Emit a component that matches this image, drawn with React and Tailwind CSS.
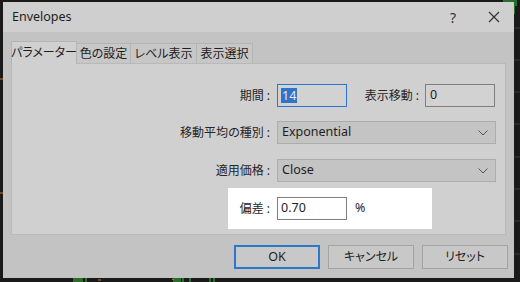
import React from 'react';

const jp = { fontFamily: '"Noto Sans", "Noto Sans CJK JP", sans-serif' };

// Chart behind the dialog (only the edges are visible)
const ChartBackdrop = () => (
  <svg className="absolute inset-0" width="520" height="282" viewBox="0 0 520 282">
    <rect width="520" height="282" fill="#1a1a1a" />
    {[28, 60, 92, 124, 157, 189, 221, 254].map((y) => (
      <line key={y} x1="514" x2="520" y1={y} y2={y} stroke="#3a3a3a" />
    ))}
    <line x1="0" x2="3" y1="79" y2="79" stroke="#c27a2a" />
    <line x1="0" x2="3" y1="193" y2="193" stroke="#c27a2a" />
    {[504, 506, 508, 510, 512, 514, 516].map((x, i) => (
      <line key={x} x1={x} x2={x} y1="0" y2={6 + (i % 3) * 4} stroke="#38c23a" />
    ))}
    {[74, 76, 78, 80, 82, 86, 174, 176, 178, 180, 183, 190, 210, 214].map((x) => (
      <line key={x} x1={x} x2={x} y1="278" y2="282" stroke="#38c23a" />
    ))}
    <line x1="98" x2="101" y1="280" y2="280" stroke="#c27a2a" />
    <line x1="172" x2="174" y1="279" y2="280" stroke="#c27a2a" />
  </svg>
);

const Chevron = () => (
  <svg width="10" height="6" viewBox="0 0 10 6" className="text-[#555]">
    <path d="M0.5 0.5 L5 5 L9.5 0.5" fill="none" stroke="currentColor" strokeWidth="1" />
  </svg>
);

const Select = ({ value }) => (
  <div className="flex items-center justify-between w-[219px] h-[23px] bg-[#c4c4c4] border border-[#adadad] pl-[4px] pr-[7px] text-[12.5px] text-[#1e1e1e]">
    <span>{value}</span>
    <Chevron />
  </div>
);

const Label = ({ children, className = '' }) => (
  <div className={`text-right whitespace-nowrap text-[12px] text-[#262626] pr-[1px] ${className}`}>{children}</div>
);

export default function App() {
  const tabs = [
    { label: '色の設定', w: 'w-[54px]' },
    { label: 'レベル表示', w: 'w-[66px]' },
    { label: '表示選択', w: 'w-[56px]' },
  ];

  return (
    <div className="relative w-[520px] h-[282px] overflow-hidden [font-feature-settings:'palt']" style={jp}>
      <ChartBackdrop />

      <div className="relative pl-[3px] pt-[2px]">
        <div className="w-[511px] h-[276px] bg-[#c3c3c3] flex flex-col">
          {/* Title bar */}
          <div className="h-[30px] bg-[#cfcfcf] flex items-center pl-[9px] text-[12.5px] text-[#1e1e1e]">
            <span className="flex-1">Envelopes</span>
            <span className="w-[20px] text-center text-[14px] text-[#333] mr-[25px]">?</span>
            <svg width="12" height="12" viewBox="0 0 12 12" className="mr-[14px]">
              <path d="M1 1 L11 11 M11 1 L1 11" stroke="#333" strokeWidth="1.2" />
            </svg>
          </div>

          <div className="px-[8px] pt-[8px]">
            {/* Tabs */}
            <div className="flex items-end h-[23px]">
              <div className="w-[66px] h-[23px] bg-[#d0d0d0] border border-b-0 border-[#b4b4b4] flex items-center justify-center whitespace-nowrap text-[12px] text-[#1e1e1e] relative z-10 translate-y-[1px]">
                パラメーター
              </div>
              {tabs.map((t) => (
                <div
                  key={t.label}
                  className={`${t.w} h-[20px] bg-[#c7c7c7] border border-l-0 border-b-0 border-[#b4b4b4] flex items-center justify-center whitespace-nowrap text-[12px] text-[#1e1e1e]`}
                >
                  {t.label}
                </div>
              ))}
            </div>

            {/* Panel */}
            <div className="h-[172px] bg-[#d0d0d0] border border-[#b9b9b9] pt-[20px] flex flex-col">
              <div className="flex items-center h-[23px]">
                <Label className="w-[259px]">期間 :</Label>
                <div className="ml-[6px] w-[70px] h-[23px] border border-[#2b78c9] bg-[#d2d2d2] flex items-center pl-[3px]">
                  <span className="bg-[#2f74c8] text-[#e6e6e6] text-[12.5px] leading-[15px] px-[1px]">14</span>
                </div>
                <Label className="w-[73px]">表示移動 :</Label>
                <div className="ml-[5px] w-[70px] h-[23px] border border-[#7f7f7f] bg-[#d2d2d2] flex items-center pl-[4px] text-[12.5px] text-[#1e1e1e]">
                  0
                </div>
              </div>

              <div className="flex items-center h-[23px] mt-[14px]">
                <Label className="w-[259px]">移動平均の種別 :</Label>
                <div className="ml-[6px]">
                  <Select value="Exponential" />
                </div>
              </div>

              <div className="flex items-center h-[23px] mt-[15px]">
                <Label className="w-[259px]">適用価格 :</Label>
                <div className="ml-[6px]">
                  <Select value="Close" />
                </div>
              </div>

              <div className="ml-[216px] mt-[6px] w-[204px] h-[41px] bg-white flex items-center">
                <Label className="w-[43px]">偏差 :</Label>
                <div className="ml-[6px] w-[70px] h-[23px] border border-[#7f7f7f] bg-white flex items-center pl-[3px] text-[12.5px] text-[#1e1e1e]">
                  0.70
                </div>
                <span className="ml-[8px] text-[12.5px] text-[#262626]">%</span>
              </div>
            </div>

            {/* Buttons */}
            <div className="flex justify-end gap-[8px] mt-[10px] -mr-[2px]">
              <button className="w-[86px] h-[24px] bg-[#c8c8c8] border-2 border-[#2b78c9] text-[12.5px] text-[#1e1e1e]">
                OK
              </button>
              <button className="w-[86px] h-[24px] bg-[#c8c8c8] border border-[#a3a3a3] text-[12px] text-[#1e1e1e]">
                キャンセル
              </button>
              <button className="w-[86px] h-[24px] bg-[#c8c8c8] border border-[#a3a3a3] text-[12px] text-[#1e1e1e]">
                リセット
              </button>
            </div>
          </div>
        </div>
      </div>
    </div>
  );
}
